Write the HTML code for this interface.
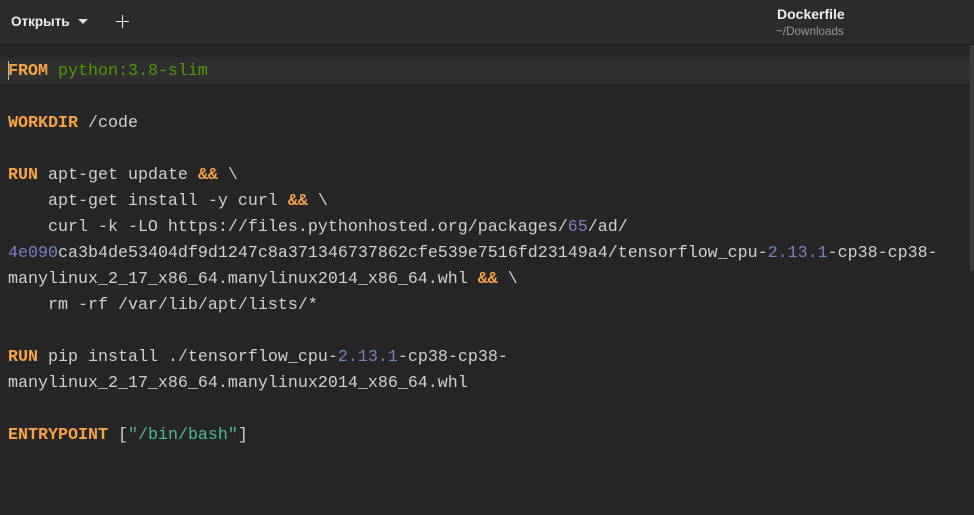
<!DOCTYPE html>
<html><head><meta charset="utf-8"><style>
html,body{margin:0;padding:0;width:974px;height:515px;overflow:hidden;background:#262626;}
.hdr{position:absolute;left:0;top:0;width:974px;height:44px;background:#2c2c2c;border-bottom:1px solid #1b1b1b;font-family:"Liberation Sans","Noto Sans CJK SC",sans-serif;color:#eee;}
.open{position:absolute;left:11px;top:14px;font-size:13.5px;font-weight:bold;}
.tri{position:absolute;left:78px;top:19px;width:0;height:0;border-left:5px solid transparent;border-right:5px solid transparent;border-top:5px solid #ddd;}
.plus1{position:absolute;left:116px;top:21px;width:13px;height:1px;background:#eee;}
.plus2{position:absolute;left:122px;top:15px;width:1px;height:13px;background:#eee;}
.title{position:absolute;left:777px;top:6px;font-size:14px;font-weight:bold;}
.sub{position:absolute;left:776px;top:25px;font-size:11.7px;color:#999;}
.cur{position:absolute;left:0;top:57px;width:970px;height:26px;background:#2f2f2f;}
.caret{position:absolute;left:8px;top:61px;width:1px;height:19px;background:#bbb;}
.sb{position:absolute;left:970px;top:45px;width:4px;height:226px;background:#3a3a3a;}
pre{position:absolute;left:8px;top:59px;margin:0;font-family:"Liberation Mono",monospace;font-size:16.67px;line-height:26px;color:#d0d0d0;}
.k{color:#f5a343;font-weight:bold;}
.g{color:#4e9a06;}
.n{color:#7a80c4;}
.s{color:#52b99e;}
</style></head><body>
<div class="hdr"><div class="open">Открыть</div><div class="tri"></div><div class="plus1"></div><div class="plus2"></div>
<div class="title">Dockerfile</div><div class="sub">~/Downloads</div></div>
<div class="cur"></div><div class="sb"></div>
<pre><span class="k">FROM</span> <span class="g">python:3.8-slim</span>

<span class="k">WORKDIR</span> /code

<span class="k">RUN</span> apt-get update <span class="k">&amp;&amp;</span> \
    apt-get install -y curl <span class="k">&amp;&amp;</span> \
    curl -k -LO https://files.pythonhosted.org/packages/<span class="n">65</span>/ad/
<span class="n">4e090</span>ca3b4de53404df9d1247c8a371346737862cfe539e7516fd23149a4/tensorflow_cpu-<span class="n">2.13.1</span>-cp38-cp38-
manylinux_2_17_x86_64.manylinux2014_x86_64.whl <span class="k">&amp;&amp;</span> \
    rm -rf /var/lib/apt/lists/*

<span class="k">RUN</span> pip install ./tensorflow_cpu-<span class="n">2.13.1</span>-cp38-cp38-
manylinux_2_17_x86_64.manylinux2014_x86_64.whl

<span class="k">ENTRYPOINT</span> [<span class="s">"/bin/bash"</span>]</pre>
<div class="caret"></div>
</body></html>
